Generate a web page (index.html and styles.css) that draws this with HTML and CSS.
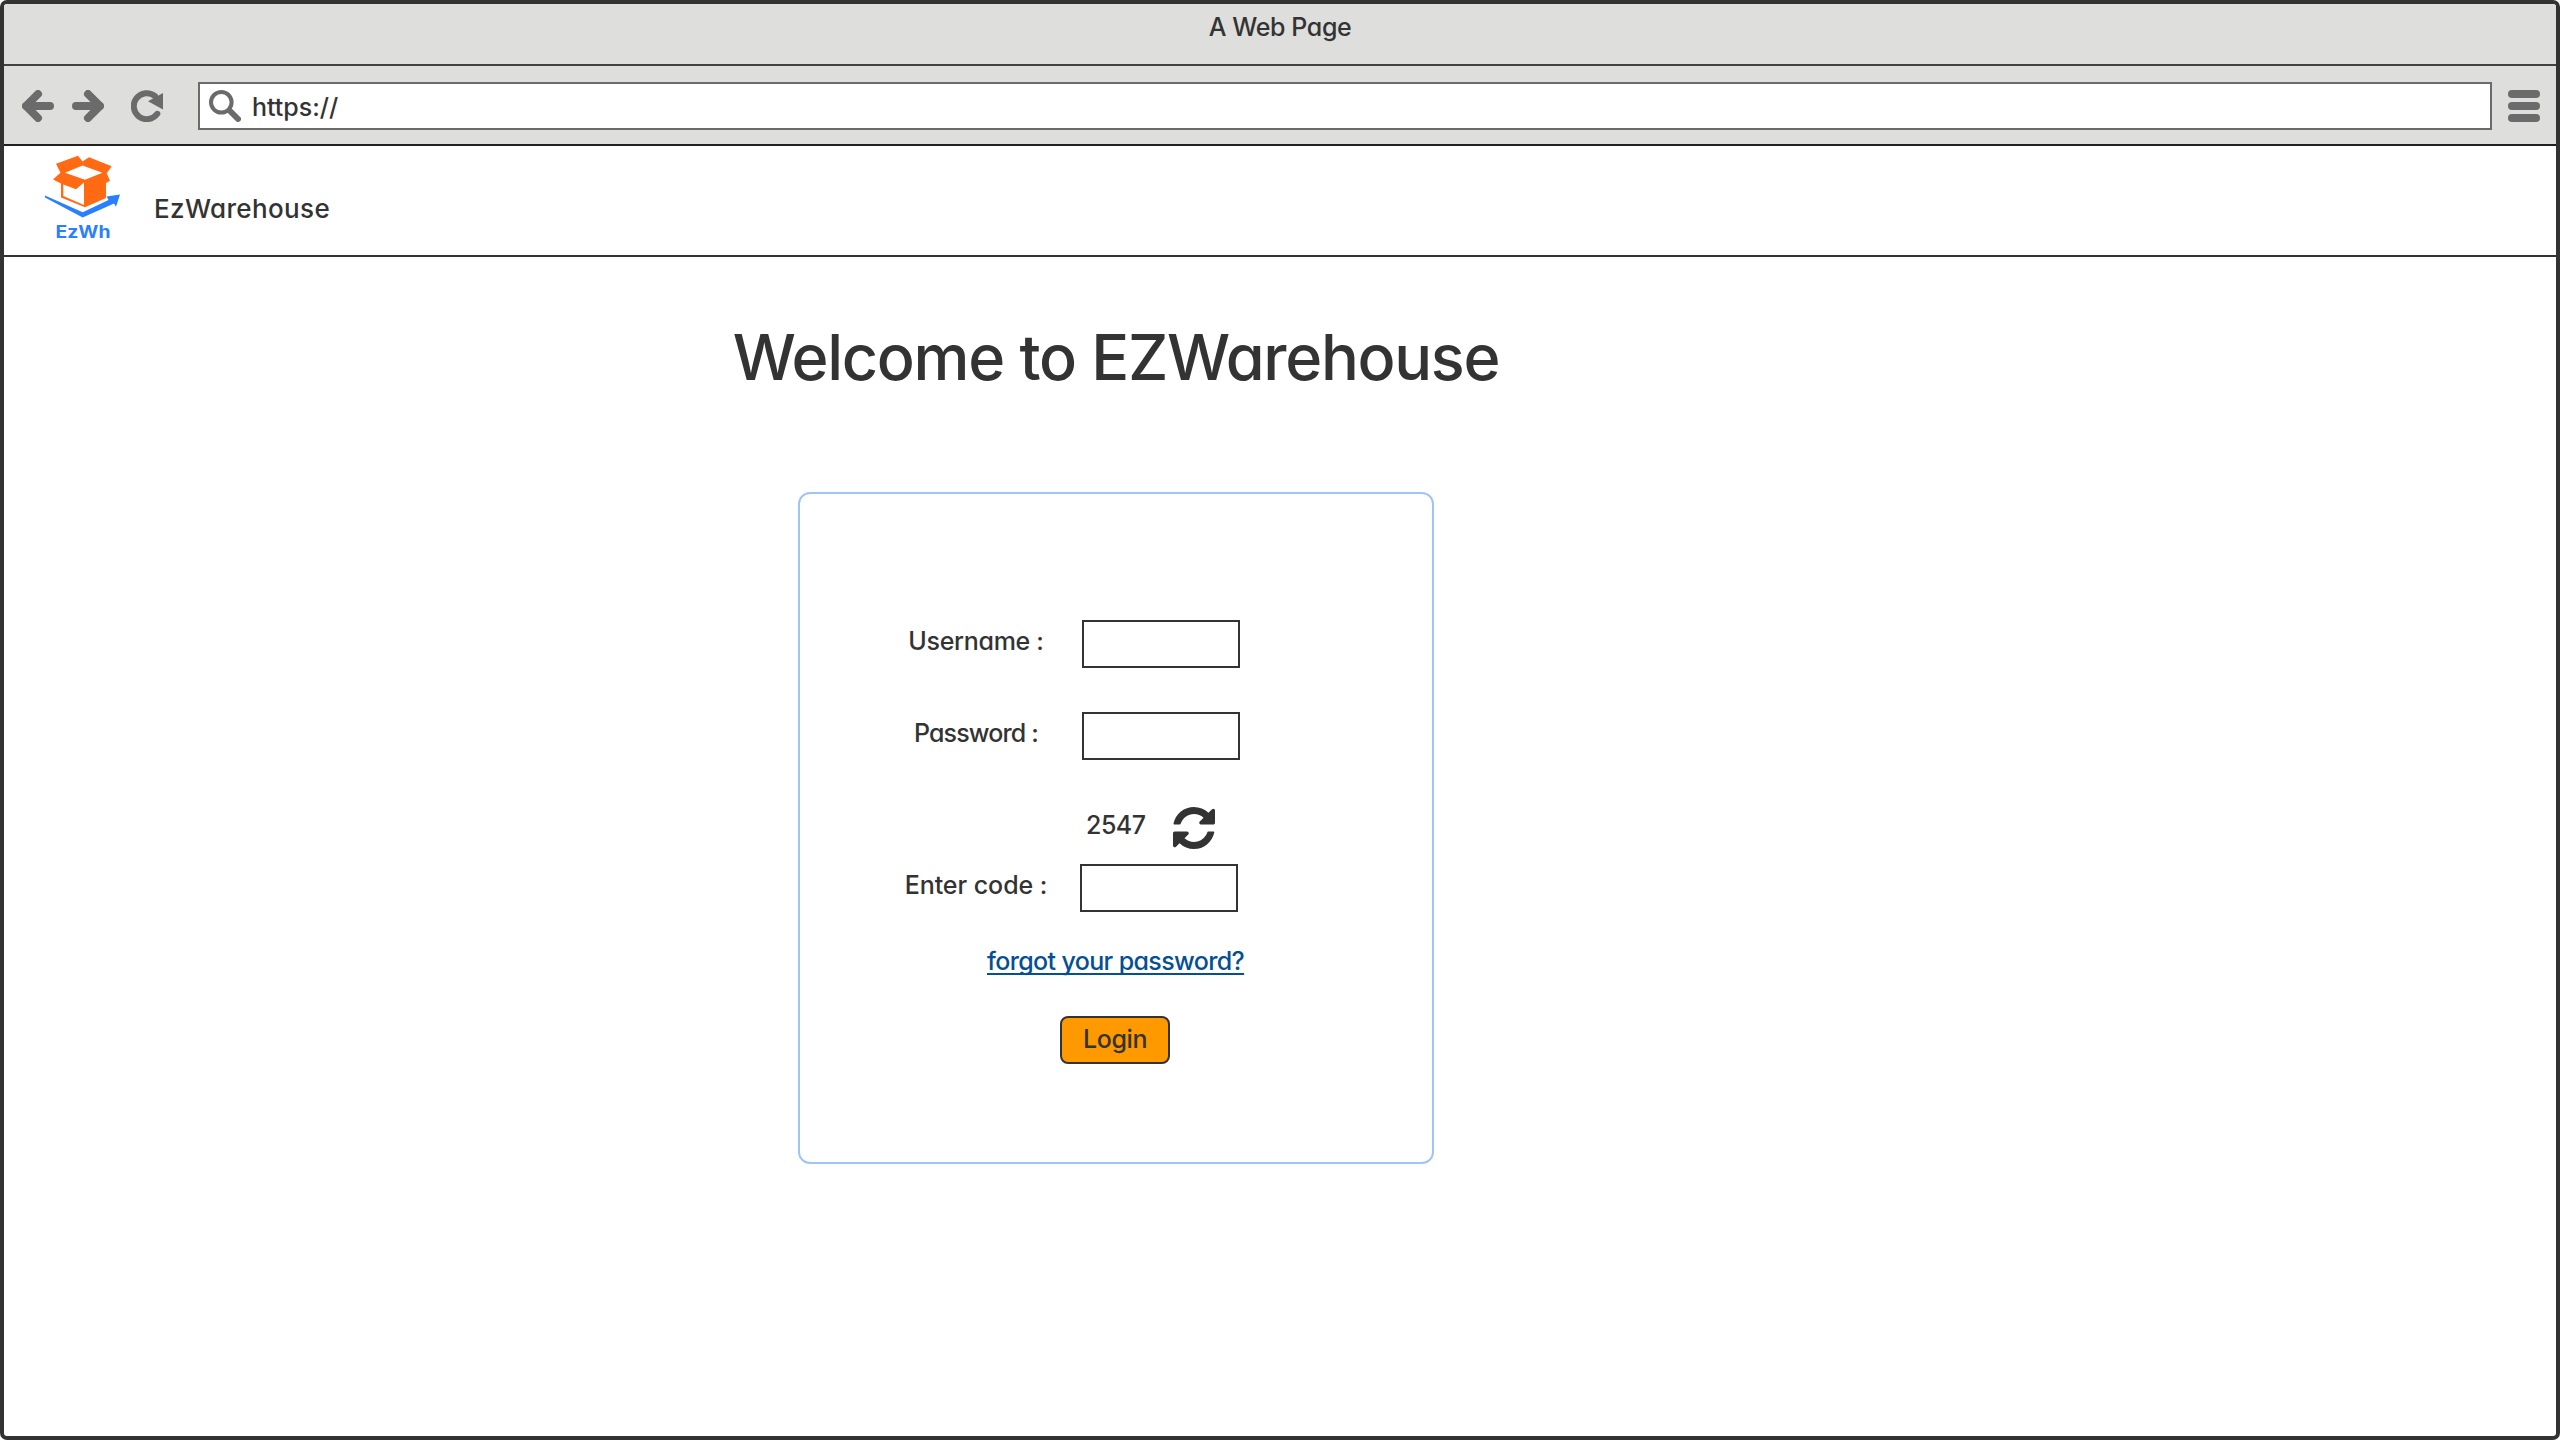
FILE: index.html
```html
<!DOCTYPE html>
<html lang="en">
<head>
<meta charset="utf-8">
<title>EzWarehouse</title>
<link rel="stylesheet" href="styles.css">
</head>
<body>
<div class="window">
  <div class="titlebar"><span class="t-title">A Web Page</span></div>
  <div class="toolbar">
    <svg class="nav-icon back" viewBox="0 0 32 32"><path d="M4 16H28M16 4L4 16L16 28"/></svg>
    <svg class="nav-icon forward" viewBox="0 0 32 32"><path d="M4 16H28M16 4L28 16L16 28"/></svg>
    <svg class="nav-icon reload" viewBox="0 0 32 32"><path class="arc" d="M26.3 23.8A13 13 0 1 1 24 6.1"/><path class="tip" d="M32 3V19.5L17 11.3Z"/></svg>
    <div class="address">
      <svg class="search" viewBox="0 0 32 32"><circle cx="12.3" cy="12.3" r="10.3"/><path d="M20.5 20.5L29 29"/></svg>
      <span class="t-url">https://</span>
    </div>
    <div class="menu"><i></i><i></i><i></i></div>
  </div>
  <header class="site-header">
    <svg class="logo" viewBox="0 0 78 88">
      <path class="orange" fill-rule="evenodd" d="M11 8.700L33 .8L37.500 6.500L44 2.300L66.700 11.300L61.700 18.300L65 25.700L61 28V43L40 52.300L16 42.500V28.500L8 24.500L15.500 17.700ZM20 17.700L40 24.700L57.300 17.700L37.500 10.500ZM18.300 29.500V41L39 50V27.500L31 34.300Z"/>
      <path class="blue" d="M0 40.500V42.500L37.700 62.500L69 48.500L71 51.700L75 39.500L61.500 41.500L63.500 45L37.700 57.300Z"/>
      <text class="logo-text" x="10.5" y="83" textLength="55" lengthAdjust="spacingAndGlyphs">EzWh</text>
    </svg>
    <span class="t-brand">EzWarehouse</span>
  </header>
  <main class="content">
    <h1><span class="t-h1">Welcome to EZWarehouse</span></h1>
    <form class="card">
      <div class="row"><label><span class="t-user">Username :</span></label><input type="text"></div>
      <div class="row"><label><span class="t-pass">Password :</span></label><input type="text"></div>
      <div class="captcha"><span class="t-code">2547</span>
        <svg class="refresh" viewBox="0 0 1536 1536"><path d="M1511 928q0 5-1 7-64 268-268 434.500t-478 166.500q-146 0-282.500-55t-243.500-157l-129 129q-19 19-45 19t-45-19-19-45v-448q0-26 19-45t45-19h448q26 0 45 19t19 45-19 45l-137 137q71 66 161 102t187 36q134 0 250-65t186-179q11-17 53-117 8-23 30-23h192q13 0 22.500 9.500t9.500 22.500zm25-800v448q0 26-19 45t-45 19h-448q-26 0-45-19t-19-45 19-45l138-138q-148-137-349-137-134 0-250 65t-186 179q-11 17-53 117-8 23-30 23h-199q-13 0-22.500-9.500t-9.500-22.500v-7q65-268 270-434.500t480-166.500q146 0 284 55.500t245 156.500l130-129q19-19 45-19t45 19 19 45z"/></svg>
      </div>
      <div class="row code-row"><label><span class="t-enter">Enter code :</span></label><input type="text"></div>
      <a class="forgot">forgot your password?</a>
      <button type="button"><span class="t-login">Login</span></button>
    </form>
  </main>
</div>
</body>
</html>
```
FILE: styles.css
```css
* { box-sizing: border-box; }
body { margin: 0; background: #fff; }
.window {
  width: 2560px; height: 1440px;
  border: 4px solid #333; border-radius: 7px; overflow: hidden;
  display: flex; flex-direction: column;
  background: #fff; color: #333;
  font: 500 25px/30px Inter, "Liberation Sans", sans-serif;
  font-feature-settings: "cv11";
  white-space: nowrap;
}
.titlebar { height: 62px; background: #dededd; border-bottom: 2px solid #414141; text-align: center; padding-top: 8px; }
.toolbar { height: 80px; background: #dededd; border-bottom: 2px solid #231f20; display: flex; align-items: center; padding: 2px 16px 0 18px; }
.nav-icon { width: 32px; height: 32px; fill: none; stroke: #6b6b6b; stroke-width: 8; stroke-linecap: round; stroke-linejoin: round; }
.forward { margin-left: 18px; }
.reload { margin-left: 27px; }
.reload .arc { stroke-width: 6; }
.reload .tip { fill: #6b6b6b; stroke: none; }
.address { flex: 1; height: 48px; margin: 0 16px 0 35px; background: #fff; border: 2px solid #6b6b6b; display: flex; align-items: center; padding-left: 9px; }
.search { width: 32px; height: 32px; margin-right: 11px; fill: none; stroke: #6b6b6b; stroke-width: 4; }
.search path { stroke-width: 6; stroke-linecap: round; }
.menu { display: flex; flex-direction: column; gap: 4px; }
.menu i { width: 32px; height: 8px; border-radius: 4px; background: #6b6b6b; }
.site-header { height: 111px; border-bottom: 2px solid #333; display: flex; align-items: flex-start; padding-left: 41px; }
.logo { width: 78px; height: 88px; margin-top: 9px; }
.orange { fill: #ff6a13; }
.blue { fill: #2a7fff; }
.logo-text { fill: #2a7fff; font: 700 17px Inter, sans-serif; }
.t-title { letter-spacing: -0.4px; }
.t-url { padding-top: 2px; }
.t-brand { margin: 48px 0 0 31px; font-size: 26px; letter-spacing: 0.35px; }
.t-h1 { letter-spacing: -1.3px; }
.t-pass { letter-spacing: -0.85px; }
.t-user { letter-spacing: -0.3px; }
.t-enter { letter-spacing: -0.05px; }
.t-code { padding-top: 3px; letter-spacing: -0.5px; }
.t-login { letter-spacing: -0.4px; }
.content { flex: 1; display: flex; flex-direction: column; align-items: center; width: 2224px; }
h1 { margin: 62px 0 0; font-size: 63px; line-height: 76px; font-weight: 500; }
.card { margin-top: 97px; width: 636px; height: 672px; border: 2px solid #9fc5f8; border-radius: 12px; display: flex; flex-direction: column; align-items: flex-start; padding: 126px 0 0 98px; }
.row { display: flex; margin-bottom: 44px; }
label { width: 156px; padding-top: 6px; text-align: center; }
input { width: 158px; height: 48px; border: 2px solid #333; background: #fff; margin: 0 0 0 28px; padding: 0; }
.captcha { display: flex; margin: 3px 0 15px 188px; }
.refresh { width: 42px; height: 42px; fill: #333; margin-left: 27px; }
.code-row { margin: 0 0 34px; }
.code-row input { margin-left: 26px; }
.forgot { color: #054f94; height: 30px; margin-left: 89px; letter-spacing: -0.63px; text-decoration: underline; text-decoration-thickness: 2px; text-underline-offset: 3px; text-decoration-skip-ink: none; }
button { width: 110px; height: 48px; border: 2px solid #333; border-radius: 8px; background: #ff9900; color: #333; font: inherit; font-feature-settings: inherit; padding: 0 0 2px; margin: 40px 0 0 162px; }
```
